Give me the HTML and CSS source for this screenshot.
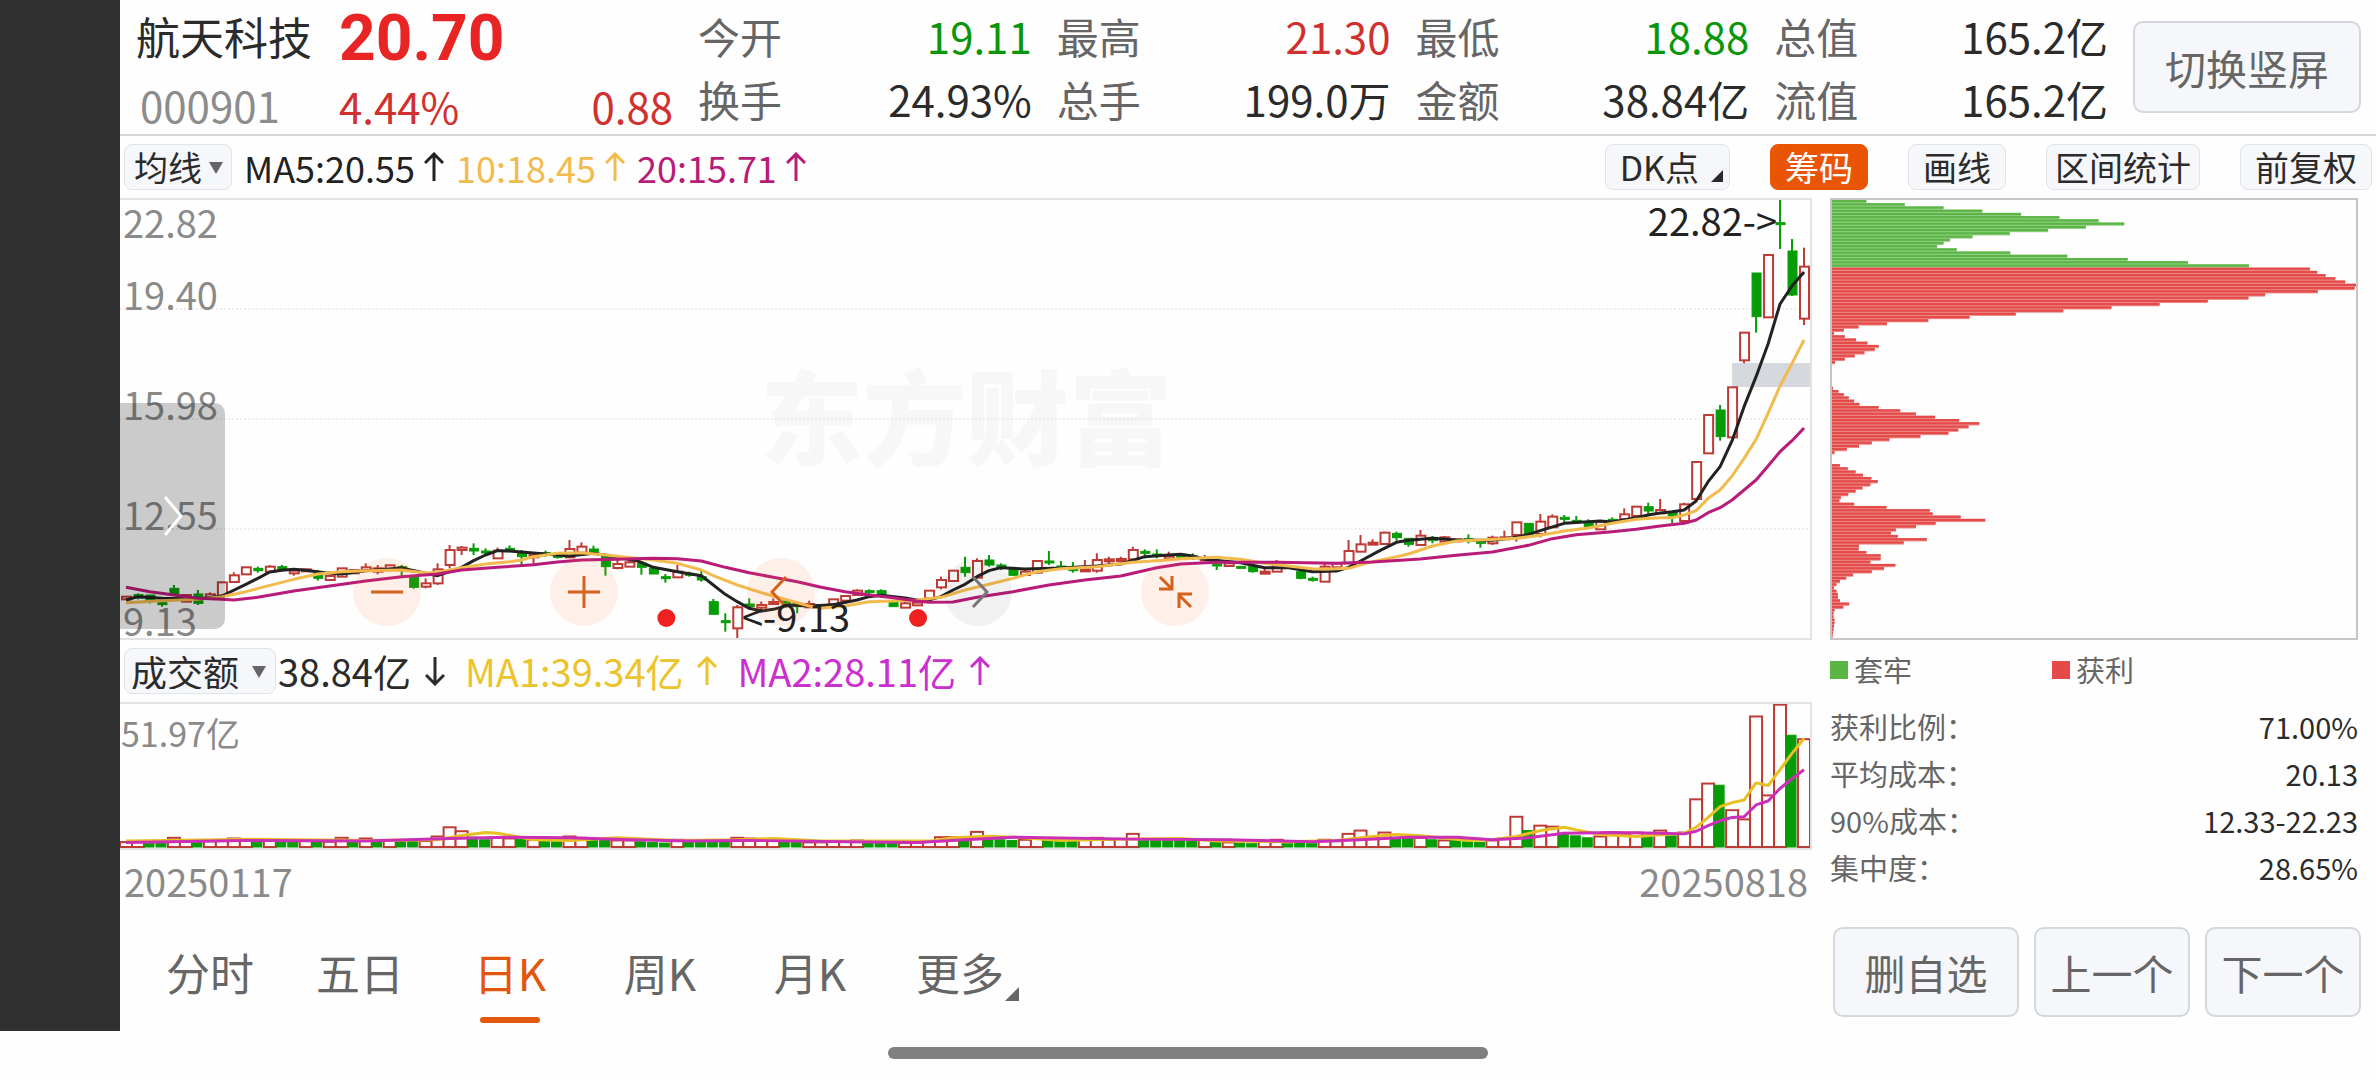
FILE: index.html
```html
<!DOCTYPE html>
<html lang="zh-CN">
<head>
    <meta charset="UTF-8">
    <meta name="viewport" content="width=device-width, initial-scale=1.0">
    <title>航天科技 000901 日K</title>
    <link rel="stylesheet" href="styles.css">
</head>
<body>
    <div class="screen">
        <div class="notch"></div>
        <main class="app">
            <header class="quote">
                <div class="stock">
                    <h1>航天科技</h1>
                    <span class="code">000901</span>
                </div>
                <div class="price">
                    <strong>20.70</strong>
                    <div class="change"><span>4.44%</span><span>0.88</span></div>
                </div>
                <dl class="stats">
                    <div><dt>今开</dt><dd class="down">19.11</dd></div>
                    <div><dt>最高</dt><dd class="up">21.30</dd></div>
                    <div><dt>最低</dt><dd class="down">18.88</dd></div>
                    <div><dt>总值</dt><dd>165.2亿</dd></div>
                    <div><dt>换手</dt><dd>24.93%</dd></div>
                    <div><dt>总手</dt><dd>199.0万</dd></div>
                    <div><dt>金额</dt><dd>38.84亿</dd></div>
                    <div><dt>流值</dt><dd>165.2亿</dd></div>
                </dl>
                <button class="big-button rotate">切换竖屏</button>
            </header>

            <div class="toolbar">
                <div class="indicator ma">
                    <label class="picker picker-tight">
                        <select aria-label="主图指标"><option>均线</option></select>
                    </label>
                    <span class="ma5">MA5:20.55<svg class="arrow" viewBox="0 0 20 30"><path d="M10 29V2M1 11L10 2L19 11"/></svg></span>
                    <span class="ma10">10:18.45<svg class="arrow" viewBox="0 0 20 30"><path d="M10 29V2M1 11L10 2L19 11"/></svg></span>
                    <span class="ma20">20:15.71<svg class="arrow" viewBox="0 0 20 30"><path d="M10 29V2M1 11L10 2L19 11"/></svg></span>
                </div>
                <div class="tools">
                    <button class="tool has-corner">DK点</button>
                    <button class="tool active">筹码</button>
                    <button class="tool">画线</button>
                    <button class="tool tight">区间统计</button>
                    <button class="tool">前复权</button>
                </div>
            </div>

            <div class="content">
                <section class="charts">
                    <div class="kline">
                        <div class="watermark">东方财富</div>
                        <svg id="kline" viewBox="0 0 1692 438" preserveAspectRatio="none"></svg>
                        <span class="axis axis-1">22.82</span>
                        <span class="axis axis-2">19.40</span>
                        <span class="axis axis-3">15.98</span>
                        <span class="axis axis-4">12.55</span>
                        <span class="axis axis-5">9.13</span>
                        <div class="controls">
                            <button class="round" aria-label="缩小"><svg viewBox="0 0 68 68"><path d="M18 34H50"/></svg></button>
                            <button class="round" aria-label="放大"><svg viewBox="0 0 68 68"><path d="M18 34H50M34 18V50"/></svg></button>
                            <button class="round" aria-label="左移"><svg viewBox="0 0 68 68"><path d="M39 19L25 34L39 49"/></svg></button>
                            <button class="round" aria-label="右移" disabled><svg viewBox="0 0 68 68"><path d="M29 19L43 34L29 49"/></svg></button>
                            <button class="round" aria-label="收起"><svg viewBox="0 0 68 68"><path d="M19 19L31 31M18 31H31V18M50 49L38 37M51 36H38V50"/></svg></button>
                        </div>
                        <span class="mark mark-high">22.82-&gt;</span>
                        <span class="mark mark-low">&lt;-9.13</span>
                        <button class="drawer" aria-label="展开"><svg viewBox="0 0 20 42"><path d="M2 2L18 21L2 40"/></svg></button>
                    </div>

                    <div class="indicator volume-bar">
                        <label class="picker">
                            <select aria-label="副图指标"><option>成交额</option></select>
                        </label>
                        <span class="vol">38.84亿<svg class="arrow" viewBox="0 0 20 30"><path d="M10 1V28M1 19L10 28L19 19"/></svg></span>
                        <span class="vol-ma1">MA1:39.34亿<svg class="arrow" viewBox="0 0 20 30"><path d="M10 29V2M1 11L10 2L19 11"/></svg></span>
                        <span class="vol-ma2">MA2:28.11亿<svg class="arrow" viewBox="0 0 20 30"><path d="M10 29V2M1 11L10 2L19 11"/></svg></span>
                    </div>

                    <div class="volume">
                        <svg id="volume" viewBox="0 0 1692 146" preserveAspectRatio="none"></svg>
                        <span class="axis axis-vol">51.97亿</span>
                    </div>
                    <div class="dates"><span>20250117</span><span>20250818</span></div>
                </section>

                <aside class="chips">
                    <svg id="chips" viewBox="0 0 1067 1319" preserveAspectRatio="none"></svg>
                    <div class="legend">
                        <span class="key trapped">套牢</span>
                        <span class="key profit">获利</span>
                    </div>
                    <dl class="details">
                        <div><dt>获利比例：</dt><dd>71.00%</dd></div>
                        <div><dt>平均成本：</dt><dd>20.13</dd></div>
                        <div><dt>90%成本：</dt><dd>12.33-22.23</dd></div>
                        <div><dt>集中度：</dt><dd>28.65%</dd></div>
                    </dl>
                </aside>
            </div>

            <footer class="bottom">
                <nav class="tabs">
                    <a href="#">分时</a>
                    <a href="#">五日</a>
                    <a href="#" class="current">日K</a>
                    <a href="#">周K</a>
                    <a href="#">月K</a>
                    <a href="#" class="more">更多</a>
                </nav>
                <div class="actions">
                    <button class="big-button wide">删自选</button>
                    <button class="big-button">上一个</button>
                    <button class="big-button">下一个</button>
                </div>
            </footer>
        </main>
    </div>
    <div class="home-bar"></div>

    <script src="chart.js"></script>
</body>
</html>
```

FILE: styles.css
```css
:root {
    --red: #d0312e;
    --green: #0a960a;
    --orange: #e2560d;
    --text: #2b2b2b;
    --muted: #666666;
    --axis: #8a8a8a;
    --line: #e3e3e3;
    --panel: #f6f7fa;
    --panel-border: #d3d8dc;
    --ma5: #222222;
    --ma10: #f2bb4e;
    --ma20: #b81b78;
}
* {
    box-sizing: border-box;
}
body {
    margin: 0;
    background: #fefefe;
    color: var(--text);
    font-family: "Noto Sans CJK SC", "Noto Sans", sans-serif;
    font-size: 42px;
    line-height: 1;
}
h1, dl, dd {
    margin: 0;
}
button, select {
    font-family: inherit;
    color: inherit;
    line-height: 1;
}
svg {
    display: block;
}
.screen {
    display: flex;
}
.notch {
    flex: 0 0 120px;
    background: #303030;
}
.app {
    flex: 1;
    min-width: 0;
}
.home-bar {
    width: 600px;
    height: 12px;
    margin: 16px auto 0;
    border-radius: 6px;
    background: #808080;
}

/* quote header */
.quote {
    display: flex;
    align-items: center;
    gap: 25px;
    height: 136px;
    padding: 0 15px 0 16px;
    border-bottom: 2px solid #d6d6d6;
}
.stock {
    flex: 0 0 178px;
    display: flex;
    flex-direction: column;
    gap: 26px;
    padding-top: 6px;
}
.stock h1 {
    font-size: 44px;
    font-weight: 400;
}
.code {
    padding-left: 4px;
    color: #8c8c8c;
}
.price {
    flex: 0 0 334px;
    display: flex;
    flex-direction: column;
    gap: 14px;
    color: var(--red);
}
.price strong {
    font-family: Roboto, "Noto Sans", sans-serif;
    font-size: 64px;
    font-weight: 700;
    color: #e82424;
}
.change {
    display: flex;
    justify-content: space-between;
}
.stats {
    flex: 1;
    display: grid;
    grid-template-columns: repeat(4, 1fr);
    gap: 21px 25px;
}
.stats div, .details div {
    display: flex;
    justify-content: space-between;
}
.stats dt, .details dt {
    color: var(--muted);
}
.up {
    color: var(--red);
}
.down {
    color: var(--green);
}
.big-button {
    width: 156px;
    height: 90px;
    padding: 0;
    border: 2px solid var(--panel-border);
    border-radius: 10px;
    background: var(--panel);
    color: var(--muted);
    font-size: 41px;
}
.big-button.rotate {
    width: 228px;
    height: 92px;
}
.big-button.wide {
    width: 186px;
}

/* indicator rows */
.toolbar {
    display: flex;
    justify-content: space-between;
    align-items: center;
    height: 62px;
    padding-right: 4px;
}
.indicator {
    display: flex;
    align-items: center;
    padding-left: 4px;
    font-size: 38px;
}
.ma {
    gap: 12px;
    font-size: 36px;
}
.indicator span {
    display: flex;
    align-items: center;
    gap: 9px;
}
.picker {
    position: relative;
}
.picker select {
    appearance: none;
    display: block;
    width: 152px;
    height: 46px;
    padding: 0 0 0 6px;
    border: 1px solid #e0e3e7;
    border-radius: 8px;
    background: var(--panel);
    font-size: 36px;
}
.picker::after {
    content: "";
    position: absolute;
    right: 10px;
    top: 18px;
    border: 7px solid transparent;
    border-top: 12px solid var(--muted);
    border-bottom: 0;
}
.picker-tight select {
    width: 108px;
    padding-left: 9px;
    font-size: 34px;
}
.picker-tight::after {
    right: 9px;
}
.arrow {
    width: 20px;
    height: 30px;
    fill: none;
    stroke: currentColor;
    stroke-width: 3;
}
.ma5 {
    color: var(--ma5);
}
.ma10 {
    color: var(--ma10);
}
.ma20 {
    color: var(--ma20);
}
.volume-bar {
    gap: 20px;
    height: 62px;
}
.volume-bar span {
    gap: 14px;
}
.volume-bar .picker {
    margin-right: -18px;
}
.vol-ma1 {
    color: #ecc32a;
}
.vol-ma2 {
    color: #cb2fd0;
}
.tools {
    display: flex;
    gap: 40px;
}
.tool {
    position: relative;
    height: 46px;
    padding: 0 14px;
    border: 1px solid #e0e3e7;
    border-radius: 8px;
    background: var(--panel);
    font-size: 34px;
}
.tool.tight {
    padding: 0 8px;
}
.tool.active {
    border-color: #e95504;
    background: #e95504;
    color: #ffffff;
}
.tool.has-corner {
    padding-right: 30px;
}
.has-corner::after, .more::after {
    content: "";
    position: absolute;
    right: 6px;
    bottom: 7px;
    border-left: 12px solid transparent;
    border-bottom: 12px solid currentColor;
}

/* charts */
.content {
    display: flex;
    gap: 18px;
    padding-right: 18px;
}
.charts {
    flex: 1;
    min-width: 0;
}
.kline, .volume {
    position: relative;
    border: 2px solid var(--line);
    border-left: 0;
}
.kline svg#kline {
    position: relative;
    width: 100%;
    height: 438px;
}
.volume svg {
    width: 100%;
    height: 144px;
}
.watermark {
    position: absolute;
    left: 640px;
    top: 162px;
    color: #f7f7f7;
    font-size: 103px;
    font-weight: 900;
}
.axis, .mark {
    position: absolute;
    left: 3px;
    font-size: 38px;
    color: var(--axis);
}
.axis-1 {
    top: 3px;
}
.axis-2 {
    top: 75px;
}
.axis-3 {
    top: 185px;
}
.axis-4 {
    top: 295px;
}
.axis-5 {
    top: 401px;
}
.axis-vol {
    left: 1px;
    top: 12px;
    font-size: 34px;
}
.mark {
    color: var(--ma5);
}
.mark-high {
    left: auto;
    right: 33px;
    top: 1px;
}
.mark-low {
    left: 622px;
    top: 397px;
}
.controls {
    position: absolute;
    left: 233px;
    top: 358px;
    display: flex;
    gap: 129px;
}
.round {
    width: 68px;
    height: 68px;
    padding: 0;
    border: 0;
    border-radius: 50%;
    background: rgba(255, 110, 40, 0.1);
    color: #d4611c;
}
.round:disabled {
    background: rgba(0, 0, 0, 0.05);
    color: #777777;
}
.round svg {
    fill: none;
    stroke: currentColor;
    stroke-width: 3;
}
.drawer {
    position: absolute;
    left: 0;
    top: 203px;
    width: 105px;
    height: 226px;
    padding: 0 0 0 43px;
    border: 0;
    border-radius: 0 10px 10px 0;
    background: rgba(0, 0, 0, 0.2);
}
.drawer svg {
    width: 20px;
    height: 42px;
    fill: none;
    stroke: #ffffff;
    stroke-width: 3;
}
.dates {
    display: flex;
    justify-content: space-between;
    padding: 12px 4px 0;
    color: var(--axis);
    font-size: 38px;
}

/* svg parts */
.grid {
    stroke: #dddddd;
    stroke-width: 1;
    stroke-dasharray: 2 2;
}
.gap {
    fill: #d5d8dd;
}
.dot {
    fill: #f02020;
}
.rise {
    fill: #ffffff;
    stroke: #bd3a35;
    stroke-width: 2;
}
.fall {
    fill: #069c06;
    stroke: #069c06;
    stroke-width: 1;
}
.wick-rise, .wick-fall {
    stroke: #bd3a35;
    stroke-width: 2;
}
.wick-fall {
    stroke: #069c06;
}
.curve {
    fill: none;
    stroke-width: 3;
    stroke-linejoin: round;
}
.curve-ma5 {
    stroke: var(--ma5);
}
.curve-ma10 {
    stroke: var(--ma10);
}
.curve-ma20 {
    stroke: var(--ma20);
}
.curve-vol1 {
    stroke: #e8c022;
}
.curve-vol2 {
    stroke: #cb2fb8;
}

/* chip distribution */
.chips {
    flex: 0 0 528px;
}
.chips svg {
    width: 100%;
    height: 442px;
    border: 2px solid #c6c6c6;
}
.chip-trapped {
    fill: #5ab545;
}
.chip-profit {
    fill: #e34a48;
}
.chip-edge {
    opacity: 0.65;
}
.legend {
    display: flex;
    padding: 15px 0 28px;
    color: var(--muted);
    font-size: 29px;
}
.key {
    flex: 0 0 222px;
    display: flex;
    align-items: center;
    gap: 6px;
}
.key::before {
    content: "";
    width: 18px;
    height: 18px;
    background: #5ab545;
}
.profit::before {
    background: #e34a48;
}
.details {
    display: flex;
    flex-direction: column;
    gap: 18px;
    font-size: 29px;
}

/* bottom bar */
.bottom {
    display: flex;
    justify-content: space-between;
    align-items: flex-start;
    padding: 27px 15px 8px;
}
.tabs {
    display: flex;
}
.tabs a {
    position: relative;
    width: 150px;
    padding: 23px 0 29px;
    color: var(--muted);
    font-size: 44px;
    text-align: center;
    text-decoration: none;
}
.tabs .current {
    color: var(--orange);
}
.current::after {
    content: "";
    position: absolute;
    left: 45px;
    bottom: 0;
    width: 60px;
    height: 6px;
    border-radius: 3px;
    background: var(--orange);
}
.tabs .more::after {
    right: 16px;
    bottom: 22px;
    border-left-width: 14px;
    border-bottom-width: 14px;
}
.actions {
    display: flex;
    gap: 15px;
}
```

FILE: chart.js
```js
const STEP = 12;

// side, body top, body bottom, high, low - in thirds of a unit from the base level
const candles = `
r 350 358|g 344 354 340 358|g 345 362 345 370|g 368 372 363 380|g 325 345 315 345|r 345 365|g 342 370 330 375|r 343 352 337 352|r 307 347|r 286 306 277 306
r 262 283|g 265 272 260 278|r 260 275 255 275|g 260 270 255 270|r 272 280 270 287|r 268 273|g 275 295 270 302|r 288 300|r 265 290|r 270 280
r 262 272 250 272|r 265 275 255 283|r 256 268|g 260 272 255 288|g 290 322 285 326|r 310 320 295 325|r 268 310 250 315|r 210 255 195 265|r 203 210 198 225|g 205 213 190 225
g 213 218 205 222|r 212 235 203 235|g 205 215 196 215|g 215 230 210 255|r 225 232 225 253|g 218 222 212 230|g 225 232 220 236|r 207 232 180 234|r 200 218 187 218|g 207 217 197 217
g 225 260 225 287|r 252 264 240 268|r 247 260 238 260|g 250 262 250 284|g 265 282|g 290 294 282 308|r 275 292 255 292|g 280 284 275 290|g 290 300 272 305|g 365 403 357 403
g 422 428 400 455|r 382 445 375 475|g 372 380 355 385|r 375 383 365 390|r 366 370 355 375|g 363 370|g 370 380 365 400|r 372 382 362 382|r 375 382|r 358 372
r 348 362|r 332 345 328 345|g 332 336 328 342|g 332 345 328 345|g 365 380|r 370 383 365 383|r 368 376|r 332 355|r 300 322 290 328|r 272 303
g 262 278 230 290|r 243 293 235 293|g 240 255 225 260|g 255 262 250 270|g 268 286|r 275 285 270 285|r 243 278|g 243 248 213 255|g 258 262 243 270|g 266 270 246 278
r 268 272 240 275|r 240 272 220 278|r 238 242 230 255|r 237 241 230 250|r 210 238 200 238|g 214 220 208 235|g 222 228 208 235|r 228 235 215 235|g 226 232|g 228 236 220 240
r 235 240 225 240|g 252 256 250 270|r 250 258|g 259 265|g 260 275 258 278|r 275 280 265 280|r 255 275 240 275|g 258 264|g 275 295 272 298|g 295 301 290 305
r 260 305 250 305|r 250 262|r 213 250 180 250|r 193 215 165 215|r 188 194 178 194|r 158 192 155 192|g 160 173 155 182|g 175 193 175 200|r 167 195 150 195|g 172 182 168 190
r 172 185 168 185|r 178 183|g 176 180 163 190|g 183 190 183 203|r 173 190 167 195|r 172 176 152 178|r 127 165 127 185|g 130 165|r 125 162 102 172|r 110 142 103 142
g 112 118 105 127|g 121 127 108 127|g 125 140 118 140|r 125 148|g 118 123 112 123|r 103 118 85 118|r 80 108|g 80 93 68 105|r 90 100 57 100|g 95 108 95 130
r 73 123 68 127|r -54 57|r -195 -80|g -210 -130 -225 -118|r -278 -128|r -442 -359 -442 -350|g -621 -490 -621 -442|r -675 -488|g -772 -768 -843 -693|g -687 -555 -723 -552
r -640 -484 -697 -465`;

const ma5 = "0,360 1,350 3,355 6,357 8,348 10,313 11,295 12,276 13,271 14,268 15,271 16.6,278 18,282 20,272 23,264 25,280 26,287 27,275 28,262 29,242 30,225 31,212 32,213 35,222 37,228 39,220 41,232 42.7,243 44,262 46,275 48,287 49,315 50,343 51,365 52,385 53,393 54,388 55.4,375 57,378 59,374 61,360 62,350 63,346 65,354 66.6,364 68,350 69,330 70,313 71,290 72,272 73,263 75,267 78,264 81,258 83,252 85,230 87,225 88,223 89,228 90,238 93,248 95,263 97,263 99,275 101,273 102,262 103,243 104.6,212 106,187 107,181 109,175 111,180 114,181 116,172 117,163 118.6,145 120,130 123,123 124,126 126,113 127,105 128,99 129,95 130,90 131,63 132,5 133,-40 134,-118 135,-220 136,-310 137,-408 138,-528 139,-582 140,-624";
const ma10 = "0,368 3,362 6,358 8,350 10,335 12,316 14,298 16,282 18,275 20,272 23,270 25,279 26,277 28,263 30,252 32,245 33,240 34,230 36,220 38,218 40,225 44,240 46,250 48,270 49,287 51,315 53,338 55,358 57,378 58,385 60,378 62,365 64,363 66,360 68,352 70,330 72,313 74,295 76,275 78,266 81,260 84,247 86,242 88,236 91,232 93,238 95,250 97,258 99,266 100,268 102,265 104,245 106,230 107,222 109,198 111,183 113,180 116,175 118,166 120,153 122,144 124,130 126,118 128,113 129,113 130,105 131,92 132,55 133,30 134,-12 135,-65 136,-122 137,-200 138,-282 139,-350 140,-420";
const ma20 = "0,322 2,335 4,345 6,355 8,358 9,360 11,352 14,333 17,318 20,303 23,290 26,282 28,270 31,262 34,254 36,246 38,240 41,238 44,235 46,236 48,243 50,262 52,278 54,292 56,305 58,322 60,335 62,345 64,353 66,363 67,367 69,366 71,352 74,335 77,315 80,300 83,288 86,263 88,252 91,247 96,247 101,250 104,246 108,237 111,226 114,216 117,196 119,176 121,164 124,155 126,148 128,138 130,130 131,120 132,98 133,83 134,60 135,30 136,0 137,-42 138,-85 139,-118 140,-156";

const volumes = "r15 r15 g12 g12 r28 r15 g14 r18 r22 r26 r24 g18 r20 g20 g14 r18 g16 r16 r28 g16 r26 g18 r20 g18 g18 r18 r32 r60 r48 g30 g22 r28 r26 g24 r22 g18 g16 r32 r28 g20 g22 r20 r20 g16 g14 g12 r22 g14 g14 g14 g22 r28 r26 r22 r20 g16 g14 r14 r14 r18 r18 r20 g14 g14 g14 r12 r14 r16 r30 r30 g32 r46 g24 g22 g20 r22 r26 g22 g20 g20 r26 r28 r22 r24 r40 g22 g22 g20 g20 g18 r22 g16 r14 g12 g10 r18 r22 g10 g12 g10 r22 r18 r40 r50 r30 r44 g26 g26 r28 g22 r20 g22 g16 g14 r20 r26 r92 g50 r65 r62 g40 g34 g28 r32 r36 r40 r44 g34 r50 g34 r44 r145 r193 g188 r112 r84 r397 r157 r433 g340 r328";
const volMa1 = "0,18 8,22 10,24 20,20 26,22 28,35 30,44 31,42 34,22 37,20 41,28 46,20 51,22 54,26 58,18 67,18 69,28 72,33 74,30 78,20 83,24 88,26 91,18 97,16 101,20 104,32 106,38 108,34 112,20 114,22 116,32 118,50 120,60 121,52 123,38 126,32 130,42 131,60 132,90 133,123 134,135 135,143 136,195 137,187 138,235 139,285 140,330";
const volMa2 = "0,14 10,20 20,18 27,26 32,30 37,28 42,22 47,18 52,20 60,16 66,14 70,22 74,30 84,24 92,22 99,16 103,22 107,30 111,30 114,22 117,28 120,42 124,44 128,42 130,40 131,48 132,65 133,80 134,90 135,92 136,128 137,140 138,178 139,208 140,235";

const chips = [
    70, 148, 227, 306, 385, 463, 543, 595, 517, 440, 362, 286, 240, 227, 214, 254, 363, 479, 602, 725, 849,
    973, 988, 1005, 1025, 1045, 1067, 1064, 989, 882, 848, 765, 667, 569, 471, 374, 280, 196, 112, 54, 24, 4,
    26, 49, 72, 95, 87, 66, 46, 26, 6, 0, 0, 0, 0, 0, 0, 0, 2, 13, 24, 34, 45, 56, 95, 139, 171, 210, 259, 300,
    278, 257, 237, 180, 117, 81, 55, 30, 5, 0, 0, 0, 16, 32, 48, 63, 80, 93, 78, 62, 48, 33, 18, 15, 45, 111,
    199, 205, 262, 312, 211, 171, 130, 120, 134, 193, 146, 55, 54, 70, 99, 99, 78, 129, 106, 81, 43, 29, 16, 9,
    4, 9, 12, 12, 16, 35, 23, 5, 3, 3, 5, 5, 4, 3, 2, 1
];
const TRAPPED_ROWS = 21;

const centre = i => 6 + i * STEP;
const level = v => 280 + v / 3;

function curve(points, name, toY) {
    const coords = points.split(" ").map(p => {
        const [i, v] = p.split(",").map(Number);
        return `${centre(i)},${toY(v)}`;
    });
    return `<polyline class="curve curve-${name}" points="${coords.join(" ")}"/>`;
}

function drawKline() {
    let out = "";
    [109, 219, 329].forEach(y => {
        out += `<line class="grid" x1="0" x2="1692" y1="${y}" y2="${y}"/>`;
    });
    out += '<rect class="gap" x="1614" y="163" width="78" height="24"/>';

    candles.trim().split(/[|\n]/).forEach((row, i) => {
        const [side, ...nums] = row.split(" ");
        const [top, bottom, high, low] = nums.map(n => level(Number(n)));
        const x = centre(i);
        const kind = side === "r" ? "rise" : "fall";
        const h = Math.max(bottom - top, 2);
        if (high !== undefined) {
            out += `<line class="wick-${kind}" x1="${x}" x2="${x}" y1="${high}" y2="${top}"/>`;
            out += `<line class="wick-${kind}" x1="${x}" x2="${x}" y1="${bottom}" y2="${low}"/>`;
        }
        out += `<rect class="${kind}" x="${x - 4}" y="${top}" width="9" height="${h}"/>`;
    });

    out += '<circle class="dot" cx="547" cy="418" r="9"/><circle class="dot" cx="799" cy="418" r="9"/>';
    out += curve(ma5, "ma5", level) + curve(ma10, "ma10", level) + curve(ma20, "ma20", level);
    document.getElementById("kline").innerHTML = out;
}

function drawVolume() {
    let out = "";
    volumes.split(" ").forEach((v, i) => {
        const h = Number(v.slice(1)) / 3;
        const kind = v[0] === "r" ? "rise" : "fall";
        out += `<rect class="${kind}" x="${centre(i) - 6}" y="${145 - h}" width="${kind === "rise" ? 12 : 10}" height="${h}"/>`;
    });
    const toY = v => 145 - v / 3;
    out += curve(volMa1, "vol1", toY) + curve(volMa2, "vol2", toY);
    document.getElementById("volume").innerHTML = out;
}

function drawChips() {
    const row = 1319 / chips.length;
    document.getElementById("chips").innerHTML = chips.map((w, i) => {
        const kind = i < TRAPPED_ROWS ? "chip-trapped" : "chip-profit";
        const y = i * row;
        return `<rect class="${kind} chip-edge" x="0" y="${y}" width="${w}" height="${row}"/>` +
            `<rect class="${kind}" x="0" y="${y}" width="${w}" height="${row - 3}"/>`;
    }).join("");
}

drawKline();
drawVolume();
drawChips();
```
